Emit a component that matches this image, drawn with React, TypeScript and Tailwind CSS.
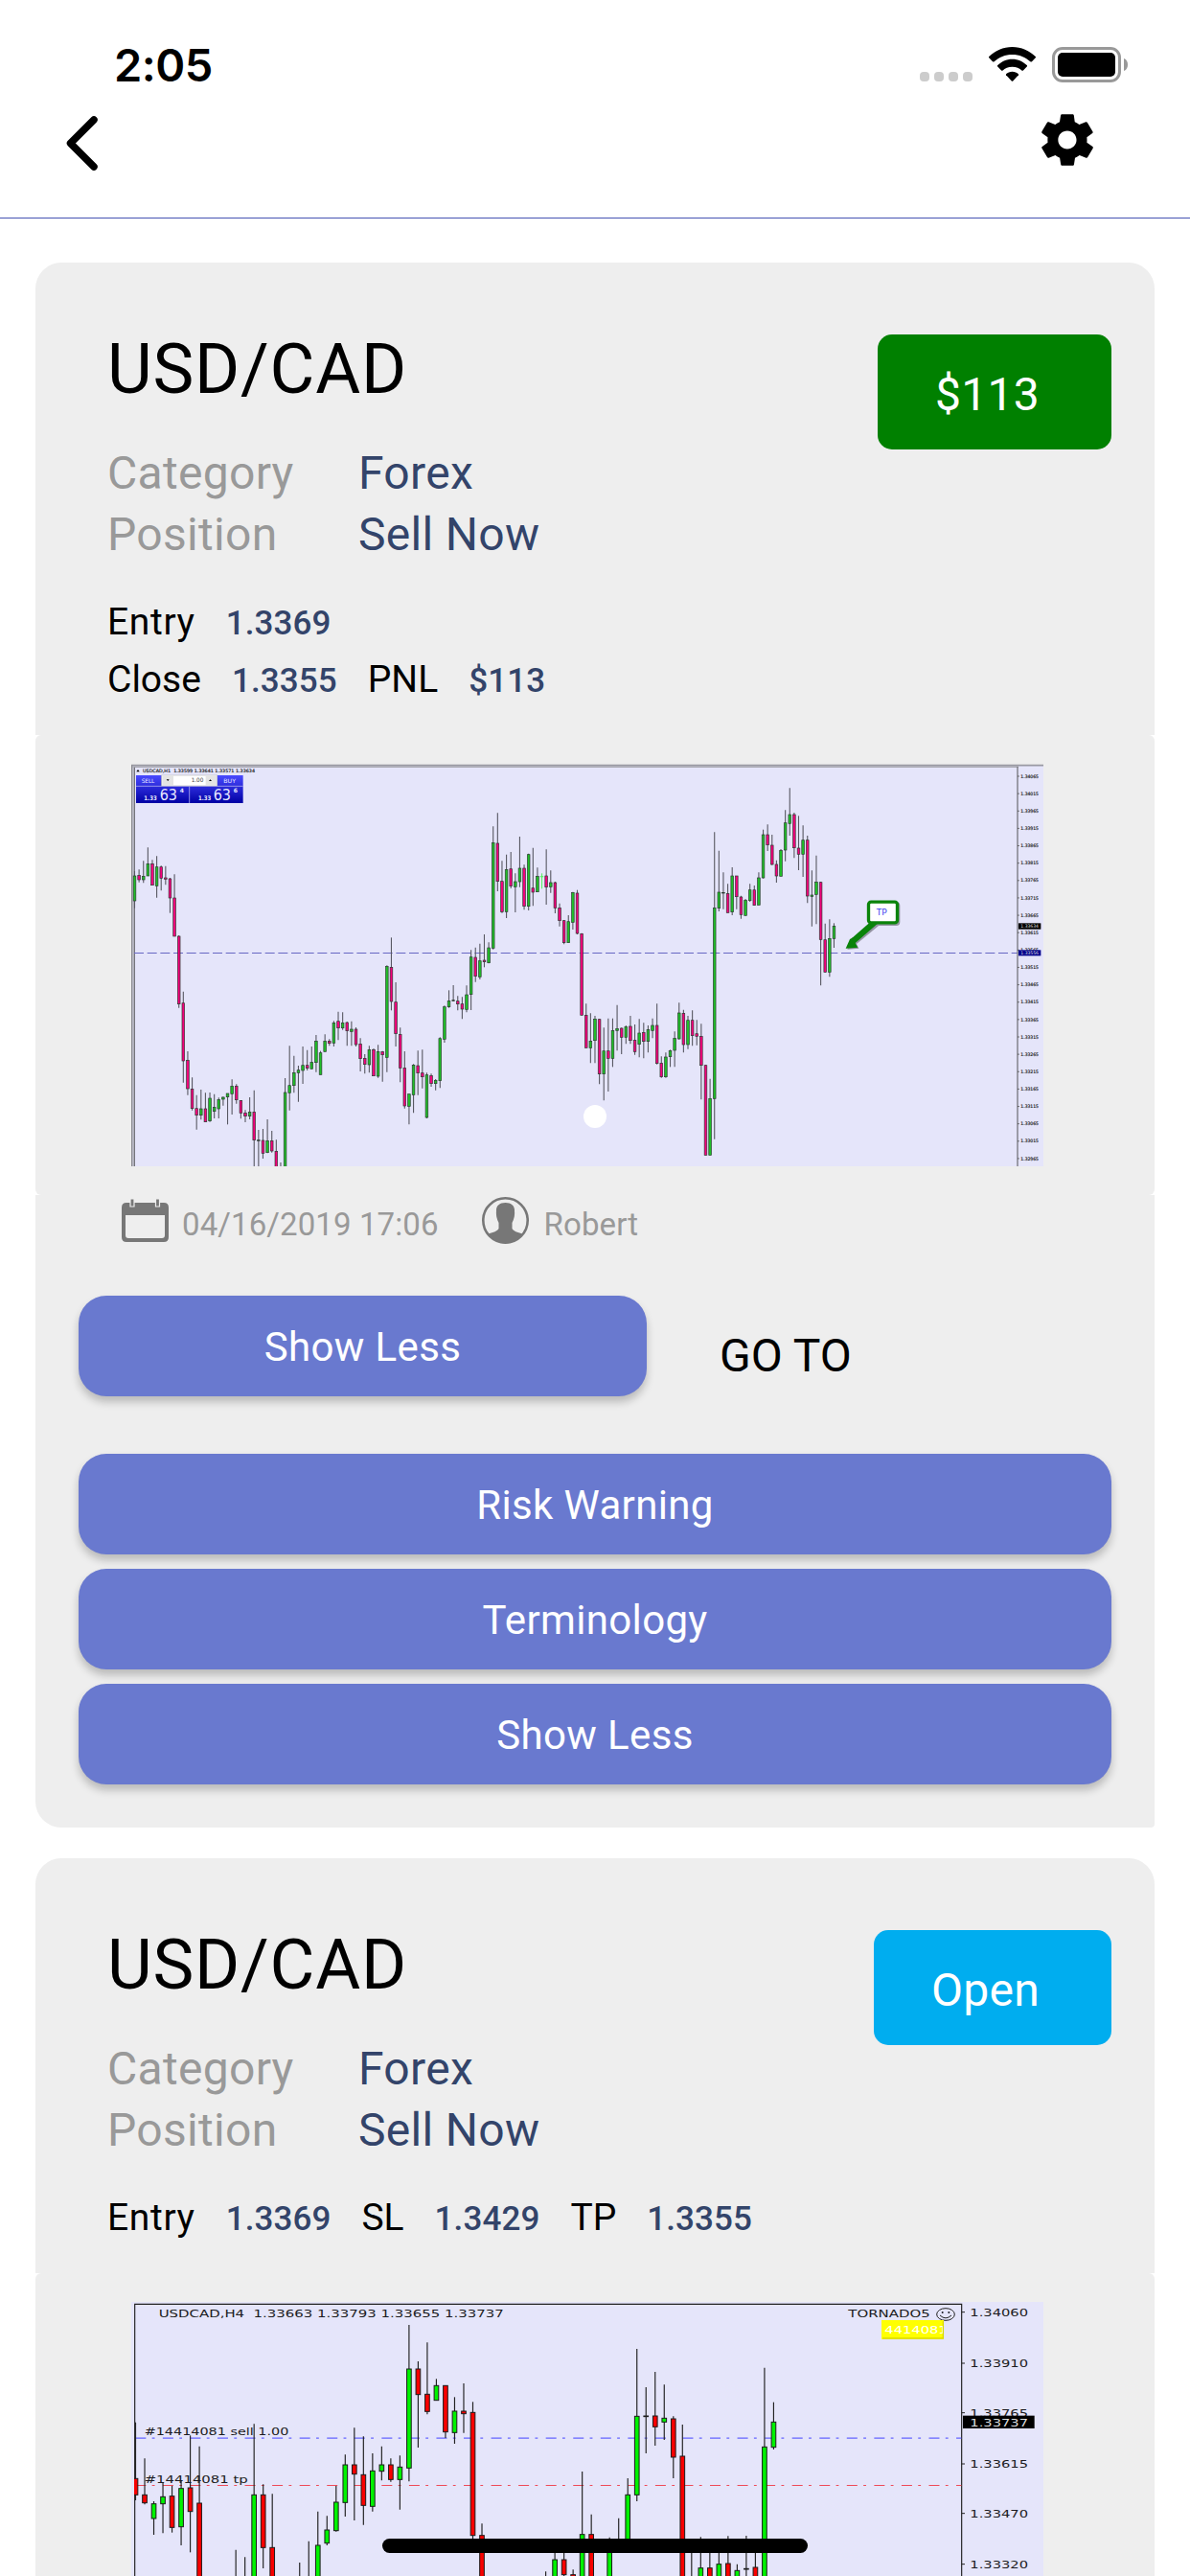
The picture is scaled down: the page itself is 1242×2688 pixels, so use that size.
import { IoMdSettings } from "react-icons/io";

// [wick top, body top, body bottom, wick bottom, colour]
type Candle = [number, number, number, number, string];

const hourly: Candle[] = [
    [387, 402, 480, 503, "g"], [382, 400, 414, 422, "r"], [355, 403, 414, 424, "g"], [313, 364, 402, 402, "g"],
    [352, 364, 431, 431, "r"], [340, 374, 433, 470, "g"], [370, 374, 409, 448, "r"], [371, 408, 412, 430, "r"],
    [408, 411, 471, 518, "r"], [397, 471, 591, 591, "r"], [588, 591, 803, 815, "r"], [764, 800, 981, 1049, "r"],
    [951, 979, 1068, 1088, "r"], [1033, 1069, 1130, 1136, "r"], [1088, 1130, 1151, 1196, "r"], [1071, 1131, 1151, 1165, "g"],
    [1081, 1131, 1172, 1172, "r"], [1080, 1098, 1169, 1172, "g"], [1085, 1126, 1139, 1161, "g"], [1096, 1102, 1131, 1161, "g"],
    [1093, 1095, 1101, 1121, "g"], [1083, 1083, 1094, 1180, "g"], [1039, 1060, 1084, 1149, "g"], [1054, 1060, 1103, 1115, "r"],
    [1104, 1105, 1144, 1162, "r"], [1135, 1144, 1154, 1173, "r"], [1095, 1141, 1154, 1164, "g"], [1073, 1141, 1229, 1312, "r"],
    [1197, 1229, 1231, 1312, "k"], [1194, 1230, 1270, 1287, "r"], [1164, 1231, 1268, 1270, "g"], [1200, 1231, 1263, 1268, "r"],
    [1228, 1264, 1316, 1316, "r"], [1299, 1316, 1316, 1316, "k"], [1035, 1080, 1316, 1316, "g"], [934, 1058, 1081, 1136, "g"],
    [965, 1018, 1058, 1081, "g"], [996, 1010, 1018, 1109, "g"], [936, 995, 1011, 1053, "g"], [947, 995, 1004, 1011, "r"],
    [936, 985, 1006, 1006, "g"], [900, 919, 986, 1016, "g"], [950, 956, 1024, 1024, "g"], [898, 919, 952, 952, "g"],
    [913, 919, 926, 934, "r"], [856, 862, 925, 936, "g"], [827, 857, 878, 916, "r"], [829, 862, 878, 884, "g"],
    [858, 861, 887, 934, "r"], [857, 882, 889, 934, "g"], [876, 882, 930, 936, "r"], [910, 928, 974, 1014, "r"],
    [960, 973, 992, 1021, "r"], [934, 946, 993, 1018, "g"], [942, 946, 1028, 1028, "r"], [931, 952, 1029, 1034, "g"],
    [950, 952, 962, 1046, "r"], [682, 685, 970, 1016, "g"], [595, 688, 795, 823, "r"], [735, 797, 896, 936, "r"],
    [877, 898, 1003, 1048, "r"], [951, 1003, 1122, 1130, "r"], [1085, 1085, 1123, 1180, "g"], [991, 994, 1087, 1144, "g"],
    [949, 996, 1019, 1088, "r"], [946, 1019, 1031, 1067, "r"], [1018, 1025, 1158, 1161, "g"], [1021, 1027, 1052, 1062, "r"],
    [1038, 1042, 1052, 1073, "g"], [907, 911, 1043, 1066, "g"], [808, 812, 913, 924, "g"], [760, 793, 812, 815, "g"],
    [744, 791, 793, 794, "k"], [778, 794, 803, 823, "r"], [781, 803, 819, 850, "r"], [745, 774, 820, 829, "g"],
    [634, 656, 773, 822, "g"], [626, 657, 716, 734, "r"], [614, 668, 718, 726, "g"], [585, 666, 671, 688, "r"],
    [610, 627, 674, 676, "g"], [247, 298, 628, 632, "g"], [205, 300, 419, 450, "r"], [355, 419, 514, 518, "r"],
    [335, 382, 514, 534, "g"], [327, 380, 434, 441, "r"], [394, 420, 436, 516, "g"], [279, 378, 420, 437, "g"],
    [367, 378, 497, 508, "r"], [332, 335, 497, 510, "g"], [314, 440, 453, 496, "r"], [376, 403, 452, 452, "g"],
    [394, 403, 405, 442, "l"], [319, 402, 437, 492, "r"], [385, 423, 436, 455, "g"], [420, 423, 502, 519, "r"],
    [488, 502, 542, 560, "r"], [540, 542, 611, 616, "r"], [525, 545, 611, 611, "g"], [452, 454, 547, 570, "g"],
    [446, 456, 582, 585, "r"], [581, 583, 838, 838, "r"], [802, 838, 940, 940, "r"], [832, 919, 940, 988, "g"],
    [840, 850, 917, 988, "g"], [850, 851, 1022, 1054, "r"], [877, 950, 1022, 1105, "g"], [848, 950, 973, 1077, "r"],
    [848, 886, 973, 1000, "g"], [806, 880, 886, 949, "g"], [877, 879, 907, 960, "r"], [870, 874, 907, 928, "g"],
    [840, 873, 917, 928, "r"], [867, 916, 952, 962, "r"], [850, 894, 929, 970, "g"], [862, 892, 920, 973, "r"],
    [870, 883, 920, 955, "g"], [848, 870, 886, 910, "g"], [802, 870, 989, 992, "r"], [967, 988, 1031, 1034, "r"],
    [955, 969, 1031, 1034, "g"], [946, 949, 968, 1000, "g"], [889, 910, 948, 1000, "g"], [799, 831, 912, 914, "g"],
    [821, 832, 930, 955, "r"], [840, 854, 930, 944, "g"], [823, 854, 902, 934, "r"], [853, 896, 904, 932, "r"],
    [865, 904, 995, 1102, "r"], [994, 995, 1276, 1276, "r"], [1037, 1099, 1276, 1276, "g"], [265, 502, 1099, 1226, "g"],
    [323, 453, 503, 513, "g"], [391, 454, 456, 506, "k"], [427, 457, 517, 517, "r"], [375, 402, 515, 525, "g"],
    [402, 402, 467, 506, "r"], [464, 468, 523, 536, "r"], [474, 478, 526, 526, "g"], [427, 446, 479, 483, "g"],
    [432, 446, 494, 494, "r"], [391, 408, 493, 493, "g"], [257, 273, 408, 410, "g"], [241, 273, 305, 324, "r"],
    [273, 306, 366, 368, "r"], [353, 366, 402, 423, "r"], [318, 322, 403, 403, "g"], [196, 236, 321, 356, "g"],
    [127, 210, 238, 276, "g"], [204, 210, 314, 346, "r"], [214, 315, 334, 384, "r"], [244, 290, 334, 405, "g"],
    [276, 290, 465, 487, "r"], [385, 462, 466, 560, "g"], [338, 421, 460, 553, "g"], [420, 422, 601, 745, "r"],
    [551, 602, 703, 704, "r"], [538, 598, 703, 718, "g"], [550, 559, 598, 627, "g"],
];

// keyed by slot, the rest of the slots are under the visible part
const fourHour: Record<number, Candle> = {
    0: [443, 619, 670, 687, "r"], 1: [556, 670, 695, 700, "r"], 2: [690, 698, 744, 795, "g"], 3: [630, 676, 698, 790, "g"],
    4: [642, 674, 772, 788, "r"], 5: [625, 650, 770, 828, "g"], 6: [484, 648, 722, 850, "r"], 7: [518, 696, 940, 940, "r"],
    11: [842, 940, 940, 940, "g"], 12: [865, 940, 940, 940, "g"], 13: [448, 670, 940, 940, "g"], 14: [637, 670, 835, 900, "r"],
    15: [667, 835, 940, 940, "r"], 18: [882, 940, 940, 940, "g"], 19: [815, 940, 940, 940, "g"], 20: [722, 828, 940, 940, "g"],
    21: [736, 780, 821, 828, "g"], 22: [642, 693, 782, 785, "g"], 23: [544, 576, 694, 738, "g"], 24: [460, 576, 605, 750, "r"],
    25: [487, 607, 703, 764, "r"], 26: [540, 595, 706, 722, "g"], 27: [518, 576, 596, 625, "g"], 28: [556, 576, 622, 629, "r"],
    29: [547, 583, 622, 716, "g"], 30: [138, 276, 586, 628, "g"], 31: [252, 276, 356, 522, "r"], 32: [193, 355, 409, 418, "r"],
    33: [307, 328, 374, 374, "g"], 34: [328, 328, 473, 492, "r"], 35: [364, 408, 475, 510, "g"], 36: [321, 408, 416, 476, "r"],
    37: [379, 412, 797, 810, "r"], 38: [760, 797, 940, 940, "r"], 45: [910, 940, 940, 940, "g"], 46: [850, 873, 940, 940, "g"],
    47: [845, 873, 920, 940, "r"], 48: [904, 920, 940, 940, "r"], 49: [597, 794, 940, 940, "g"], 50: [731, 794, 940, 940, "r"],
    52: [803, 830, 940, 940, "g"], 53: [743, 815, 840, 840, "r"], 54: [618, 670, 840, 840, "g"], 55: [213, 424, 670, 690, "g"],
    56: [333, 423, 425, 540, "k"], 57: [285, 423, 457, 516, "r"], 58: [325, 430, 442, 498, "g"], 59: [424, 432, 552, 618, "r"],
    60: [450, 549, 940, 940, "r"], 61: [840, 940, 940, 940, "r"], 62: [802, 899, 940, 940, "g"], 63: [840, 899, 940, 940, "r"],
    64: [840, 887, 940, 940, "g"], 65: [799, 885, 940, 940, "r"], 66: [887, 907, 940, 940, "g"], 67: [798, 901, 903, 940, "k"],
    68: [840, 897, 940, 940, "r"], 69: [272, 520, 940, 940, "g"], 70: [380, 442, 521, 528, "g"],
};

const hourlyColors: Record<string, string> = { g: "#20be28", r: "#f4007c", k: "#333", l: "#5ff06a" };
const fourHourColors: Record<string, string> = { g: "#00f200", r: "#f80000", k: "#111" };

function HourlyChart() {
    const labels = Array.from({ length: 23 }, (_, i) => (1.34065 - i * 0.0005).toFixed(5));

    return (
        <svg viewBox="51 51 2856 1260" preserveAspectRatio="none" className="block w-[952px] h-[420px]" fontFamily="'DejaVu Sans', sans-serif">
            <defs>
                <linearGradient id="deal" x1="0" y1="0" x2="0" y2="1">
                    <stop offset="0" stopColor="#4a4aff" />
                    <stop offset="1" stopColor="#0000a4" />
                </linearGradient>
            </defs>
            <rect x="51" y="51" width="2856" height="1260" fill="#e5e5fa" />
            <rect x="51" y="51" width="2856" height="4" fill="#d6d6d8" />
            <rect x="51" y="55" width="2856" height="3" fill="#77777d" />
            <rect x="51" y="58" width="2778" height="5" fill="#a9a9b2" />
            <rect x="51" y="55" width="4" height="1256" fill="#8a8a90" />
            <rect x="55" y="58" width="5" height="1253" fill="#b0b0ba" />
            <rect x="60" y="62" width="3" height="1249" fill="#74747c" />
            <path d="M60 643.5H2826" stroke="#6767c4" strokeWidth="3.5" strokeDasharray="30 11" />

            {hourly.map(([wt, bt, bb, wb, c], i) => {
                const x = 61.5 + i * 13.86
                return (
                    <g key={i}>
                        <path d={`M${x} ${wt}V${wb}`} stroke={c == "l" ? "#5ff06a" : "#585862"} strokeWidth="3.3" />
                        <rect x={x - 4} y={bt} width="8" height={bb - bt} fill={hourlyColors[c]} stroke={c == "l" ? "#5ff06a" : "#2b3a30"} strokeWidth="2" />
                    </g>
                )
            })}

            <path d="M67 76l5 -7l5 7z" />
            <text x="87" y="78" fontSize="14" fill="#222" stroke="#222" strokeWidth="0.5" textLength="351" lengthAdjust="spacingAndGlyphs" xmlSpace="preserve">USDCAD,H1  1.33599 1.33641 1.33571 1.33634</text>
            <rect x="66" y="87" width="335" height="87" fill="url(#deal)" />
            <path d="M233 121V174M66 121H401" stroke="#a9a9ee" strokeWidth="2.5" />
            <rect x="146" y="87" width="174" height="33" fill="#fff" stroke="#bbb" strokeWidth="2" />
            <rect x="148" y="88" width="35" height="31" fill="#e4e4e4" />
            <rect x="284" y="88" width="35" height="31" fill="#e4e4e4" />
            <path d="M161 100h9l-4.500 5zM294 105h9l-4.500 -5z" />
            <g fill="#e8e8ff">
                <text x="83" y="110" fontSize="18" textLength="41" lengthAdjust="spacingAndGlyphs">SELL</text>
                <text x="340" y="110" fontSize="18" textLength="38" lengthAdjust="spacingAndGlyphs">BUY</text>
                <text x="91" y="164" fontSize="19" fontWeight="bold" textLength="40" lengthAdjust="spacingAndGlyphs">1.33</text>
                <text x="140" y="164" fontSize="46" textLength="55" lengthAdjust="spacingAndGlyphs">63</text>
                <text x="203" y="141" fontSize="18" fontWeight="bold">4</text>
                <text x="261" y="164" fontSize="19" fontWeight="bold" textLength="40" lengthAdjust="spacingAndGlyphs">1.33</text>
                <text x="308" y="164" fontSize="46" textLength="55" lengthAdjust="spacingAndGlyphs">63</text>
                <text x="371" y="141" fontSize="18" fontWeight="bold">6</text>
            </g>
            <text x="239" y="109" fontSize="18" fill="#444" textLength="38" lengthAdjust="spacingAndGlyphs">1.00</text>

            {/* take profit callout */}
            <g transform="translate(4 4)" opacity="0.35">
                <path d="M2370 549L2312 597L2304 590L2289 628L2325 625L2318 611L2388 553z" />
                <rect x="2355" y="479" width="99" height="75" rx="12" />
            </g>
            <path d="M2362 549L2308 596L2301 600L2288 629L2326 626L2318 612L2388 551z" fill="#0a830a" />
            <rect x="2359.500" y="483.500" width="90" height="65" rx="8" fill="#fff" stroke="#0a830a" strokeWidth="10" />
            <text x="2384" y="526" fontSize="27" fill="#4141ef" textLength="33" lengthAdjust="spacingAndGlyphs">TP</text>

            <path d="M2826 60V1311" stroke="#77777f" strokeWidth="4" />
            {labels.map((l, i) => (
                <g key={l}>
                    <path d={`M2826 ${90 + i * 54.4}h5`} stroke="#555" strokeWidth="3" />
                    <text x="2836" y={95 + i * 54.4} fontSize="14" fill="#222" stroke="#222" strokeWidth="0.5" textLength="56" lengthAdjust="spacingAndGlyphs">{l}</text>
                </g>
            ))}
            <rect x="2829" y="550" width="70" height="19" fill="#000" />
            <text x="2836" y="564" fontSize="14" fill="#ddd" textLength="56" lengthAdjust="spacingAndGlyphs">1.33634</text>
            <rect x="2829" y="634" width="70" height="18" fill="#00008b" />
            <text x="2836" y="648" fontSize="14" fill="#ddd" textLength="56" lengthAdjust="spacingAndGlyphs">1.33556</text>
        </svg>
    );
}

function FourHourChart() {
    const labels: [string, number][] = [["1.34060", 98], ["1.33910", 258], ["1.33765", 413], ["1.33615", 573], ["1.33470", 728], ["1.33320", 887]]

    return (
        <svg viewBox="51 66 2856 858" preserveAspectRatio="none" className="block w-[952px] h-[286px]" fontFamily="'DejaVu Sans', sans-serif" fill="#1c1c22">
            <rect x="51" y="66" width="2856" height="858" fill="#e5e5fa" />
            <path d="M62 924V73H2651V924" fill="none" stroke="#222" strokeWidth="3.500" />
            <path d="M64 492.500H2650" stroke="#6464ff" strokeWidth="4" strokeDasharray="33 19 8.500 25.170" />
            <path d="M64 640.500H2650" stroke="#ee4a58" strokeWidth="3.500" strokeDasharray="33 19 8.500 25.170" />

            {Object.entries(fourHour).map(([slot, [wt, bt, bb, wb, c]]) => {
                const x = 64.5 + Number(slot) * 28.54
                return (
                    <g key={slot}>
                        <path d={`M${x} ${wt}V${wb}`} stroke="#222" strokeWidth="3.500" />
                        <rect x={x - 7} y={bt} width="14" height={bb - bt} fill={fourHourColors[c]} stroke="#1c1c1c" strokeWidth="3" />
                    </g>
                )
            })}
            <rect x="51" y="74" width="9" height="850" fill="#e5e5fa" />

            <text x="137" y="113" fontSize="34" textLength="1080" lengthAdjust="spacingAndGlyphs" xmlSpace="preserve" className="whitespace-pre">USDCAD,H4  1.33663 1.33793 1.33655 1.33737</text>
            <text x="92" y="484" fontSize="34" textLength="452" lengthAdjust="spacingAndGlyphs">#14414081 sell 1.00</text>
            <text x="92" y="633" fontSize="34" textLength="324" lengthAdjust="spacingAndGlyphs">#14414081 tp</text>
            <text x="2296" y="115" fontSize="34" textLength="256" lengthAdjust="spacingAndGlyphs">TORNADO5</text>
            <ellipse cx="2601" cy="105" rx="28" ry="19" fill="none" stroke="#222" strokeWidth="3" />
            <path d="M2583 108q18 17 36 0" fill="none" stroke="#222" strokeWidth="3" />
            <circle cx="2591" cy="99" r="3" />
            <circle cx="2611" cy="99" r="3" />
            <rect x="2400" y="123" width="195" height="60" fill="#ff0" />
            <path d="M2403 180H2593V126" fill="none" stroke="#d9d900" strokeWidth="4" />
            <svg x="2408" y="126" width="183" height="52">
                <text x="2" y="39" fontSize="32" fill="#fff" textLength="196" lengthAdjust="spacingAndGlyphs">4414081</text>
            </svg>

            {labels.map(([l, y]) => (
                <g key={l}>
                    <path d={`M2651 ${y}h10`} stroke="#222" strokeWidth="3" />
                    <text x="2677" y={y + 12} fontSize="34" textLength="182" lengthAdjust="spacingAndGlyphs">{l}</text>
                </g>
            ))}
            <rect x="2655" y="422" width="224" height="40" fill="#000" />
            <text x="2677" y="455" fontSize="34" fill="#ddd" textLength="182" lengthAdjust="spacingAndGlyphs">1.33737</text>
        </svg>
    );
}

function Header() {
    return (
        <header className="h-[228px] border-b border-[#4653b3] bg-white">
            <div className="flex h-[118px] items-start justify-between pl-[119px] pr-[65px] pt-[49px]">
                <span className="font-['Inter'] text-[47px] font-semibold leading-[38px] tracking-[-0.5px]">2:05</span>
                <div className="flex items-start">
                    <div className="mr-[17px] mt-[26px] flex gap-[5px]">
                        <i className="size-[10px] rounded-[4px] bg-[#ccc]" />
                        <i className="size-[10px] rounded-[4px] bg-[#ccc]" />
                        <i className="size-[10px] rounded-[4px] bg-[#ccc]" />
                        <i className="size-[10px] rounded-[4px] bg-[#ccc]" />
                    </div>
                    <svg viewBox="0 0 147 108" className="mr-[17px] h-[36px] w-[49px]">
                        <path d="M73.500 0C45 0 20 12 0 30.500V33L12 46C14 47 15 47 17 46C32 32 51 24 73.500 24S115 32 130 46C132 47 133 47 135 46L147 33V30.500C127 12 102 0 73.500 0z" />
                        <path d="M73.500 38C55 38 39 46 27 58V61L40 74H43C51 66 61 62 73.500 62S96 66 104 74H107L120 61V58C108 46 92 38 73.500 38z" />
                        <path d="M73.500 77C66 77 59 80 54 85V88L72 107Q73.500 108 75 107L93 88V85C88 80 81 77 73.500 77z" />
                    </svg>
                    <svg viewBox="0 0 79 37" className="h-[37px] w-[79px]">
                        <rect x="1.500" y="1.500" width="69" height="34" rx="9.500" fill="none" stroke="#999" strokeWidth="3" />
                        <rect x="6" y="6" width="60" height="25" rx="5" />
                        <path d="M75 12C78 13 79 16 79 18.500S78 24 75 25z" fill="#999" />
                    </svg>
                </div>
            </div>
            <div className="flex items-start justify-between pl-[69px] pr-[95px]">
                <svg viewBox="0 0 33 58" className="mt-[3px] h-[58px] w-[33px]">
                    <path d="M29 4L4.500 28.500L29 53" fill="none" stroke="#000" strokeWidth="7.500" strokeLinecap="round" strokeLinejoin="round" />
                </svg>
                <IoMdSettings className="-mt-[5px] size-[66px]" />
            </div>
        </header>
    );
}

function Button({ label, className }: { label: string, className?: string }) {
    return (
        <button className={"flex h-[105px] shrink-0 items-center justify-center rounded-[29px] bg-[#6979cf] pt-[2px] text-[42px] tracking-[0.35px] text-white shadow-[0_6px_9px_rgba(0,0,0,0.22)] " + (className ?? "w-full")}>
            {label}
        </button>
    );
}

function Summary({ badge, badgeClass, rows }: { badge: string, badgeClass: string, rows: [string, string][][] }) {
    return (
        <div className="flex items-start justify-between pl-[75px] pr-[45px] pt-[75px]">
            <div className="pt-[1px]">
                <h1 className="text-[72px] leading-[72px] tracking-[0.8px]">USD/CAD</h1>
                <div className="mt-[40px] grid grid-cols-[262px_auto] text-[48px] leading-[64px] tracking-[0.3px]">
                    <span className="text-[#999]">Category</span>
                    <span className="text-[#33446a]">Forex</span>
                    <span className="text-[#999]">Position</span>
                    <span className="text-[#33446a]">Sell Now</span>
                </div>
                <div className="mt-[29px]">
                    {rows.map((row, i) => (
                        <div key={i} className="flex h-[60px] items-baseline leading-[60px]">
                            {row.map(([name, value]) => (
                                <p key={name} className="mr-[32px] flex items-baseline gap-[32px]">
                                    <span className={"text-[39px] [font-kerning:none] " + (name == "Entry" ? "tracking-[0.7px]" : "")}>{name}</span>
                                    <span className="text-[35px] font-medium tracking-[0.1px] text-[#33446a]">{value}</span>
                                </p>
                            ))}
                        </div>
                    ))}
                </div>
            </div>
            <div className={"flex h-[120px] items-center rounded-[15px] pt-[5px] text-[48px] tracking-[0.3px] text-white " + badgeClass}>{badge}</div>
        </div>
    );
}

function App() {
    return (
        <div className="relative h-[2688px] w-[1242px] overflow-hidden bg-white font-['Roboto',sans-serif] text-black">
            <Header />

            <main className="px-[37px] pt-[46px]">
                <section className="h-[1633px] rounded-[27px] rounded-br-[4px] bg-[#eee]">
                    <div className="h-[493px]">
                        <Summary
                            badge="$113"
                            badgeClass="w-[244px] pl-[60px] bg-[#008000]"
                            rows={[[["Entry", "1.3369"]], [["Close", "1.3355"], ["PNL", "$113"]]]}
                        />
                    </div>
                    <div className="bg-white">
                        <div className="relative h-[480px] rounded-[6px] bg-[#eee] pl-[100px] pt-[30px]">
                            <HourlyChart />
                            <i className="absolute left-[572px] top-[386px] size-[24px] rounded-full bg-white" />
                        </div>
                    </div>

                    <div className="flex h-[105px] items-start pl-[90px] text-[33px] leading-[40px] tracking-[0.1px] text-[#999]">
                        <svg viewBox="0 0 49 46" className="mt-[4px] h-[46px] w-[49px]" fill="#777">
                            <path fillRule="evenodd" d="M5 4H44Q49 4 49 9V40Q49 45 44 45H5Q0 45 0 40V9Q0 4 5 4zM4 17V38Q4 41 7 41H42Q45 41 45 38V17z" />
                            <path d="M9 0h4v8h-4zM35.500 0h4v8h-4z" stroke="#eee" strokeWidth="1.200" />
                        </svg>
                        <span className="ml-[14px] mt-[11px]">04/16/2019 17:06</span>
                        <svg viewBox="0 0 49 49" className="ml-[45px] mt-[2px] h-[49px] w-[49px]">
                            <circle cx="24.500" cy="24.500" r="23.200" fill="none" stroke="#777" strokeWidth="2.600" />
                            <path d="M24.500 6C31 6 34.500 9.500 34 15C34.500 20 33 24 31.500 27V33C33 36 37 36.500 42 38.500C38 44 32 48.500 24.500 48.500S11 44 7 38.500C12 36.500 16 36 17.500 33V27C16 24 14.500 20 15 15C14.500 9.500 18 6 24.500 6z" fill="#777" />
                        </svg>
                        <span className="ml-[16px] mt-[11px]">Robert</span>
                    </div>

                    <div className="flex h-[165px] items-start pl-[45px]">
                        <Button label="Show Less" className="w-[593px]" />
                        <span className="ml-[76px] mt-[35px] text-[48px] leading-[56px]">GO TO</span>
                    </div>

                    <div className="flex flex-col gap-[15px] px-[45px]">
                        <Button label="Risk Warning" />
                        <Button label="Terminology" />
                        <Button label="Show Less" />
                    </div>
                </section>

                <section className="mt-[32px] rounded-t-[27px] bg-[#eee]">
                    <div className="h-[433px]">
                        <Summary
                            badge="Open"
                            badgeClass="w-[248px] pl-[60px] bg-[#00adef]"
                            rows={[[["Entry", "1.3369"], ["SL", "1.3429"], ["TP", "1.3355"]]]}
                        />
                    </div>
                    <div className="bg-white">
                        <div className="h-[316px] rounded-t-[6px] bg-[#eee] pl-[100px] pt-[30px]">
                            <FourHourChart />
                        </div>
                    </div>
                </section>
            </main>

            {/* home indicator */}
            <div className="absolute left-[399px] top-[2649px] h-[15px] w-[444px] rounded-full bg-black" />
        </div>
    );
}

export default App;
